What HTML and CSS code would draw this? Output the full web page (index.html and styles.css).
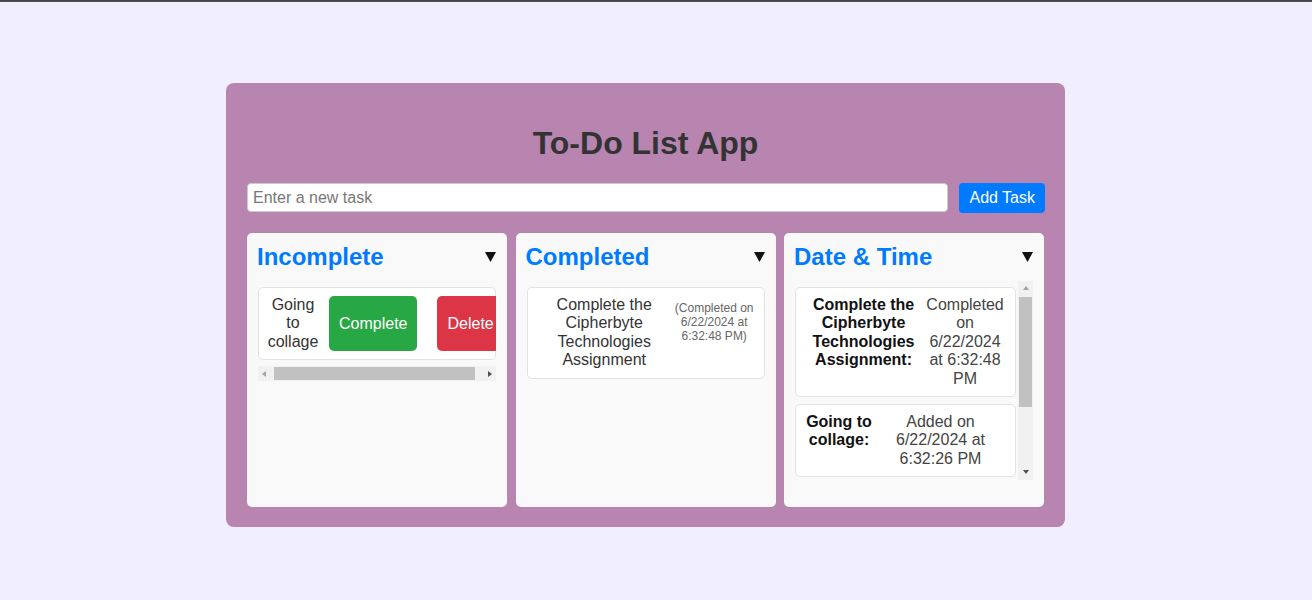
FILE: index.html
```html
<!DOCTYPE html>
<html lang="en">
<head>
<meta charset="utf-8">
<title>To-Do List App</title>
<link rel="stylesheet" href="styles.css">
</head>
<body>
<div class="app">
  <h1 class="title">To-Do List App</h1>
  <div class="add-row">
    <input class="task-input" type="text" placeholder="Enter a new task">
    <button class="add-btn">Add Task</button>
  </div>
  <div class="columns">
    <section class="column">
      <div class="col-head">
        <h2 class="col-title">Incomplete</h2>
        <span class="toggle"><svg width="11" height="10" viewBox="0 0 11 10"><polygon points="0,0 11,0 5.5,10" fill="#111"/></svg></span>
      </div>
      <div class="list list-h">
        <div class="list-items">
          <div class="task">
            <span class="task-text">Going to collage</span>
            <button class="btn btn-complete">Complete</button>
            <button class="btn btn-delete">Delete</button>
          </div>
        </div>
        <div class="hbar">
          <span class="sb-btn"><span class="arr arr-left"></span></span>
          <span class="hbar-track"><span class="hbar-thumb"></span></span>
          <span class="sb-btn"><span class="arr arr-right"></span></span>
        </div>
      </div>
    </section>
    <section class="column">
      <div class="col-head">
        <h2 class="col-title">Completed</h2>
        <span class="toggle"><svg width="11" height="10" viewBox="0 0 11 10"><polygon points="0,0 11,0 5.5,10" fill="#111"/></svg></span>
      </div>
      <div class="list">
        <div class="list-items">
          <div class="task">
            <span class="task-text">Complete the Cipherbyte Technologies Assignment</span>
            <span class="task-meta">(Completed on 6/22/2024 at 6:32:48 PM)</span>
          </div>
        </div>
      </div>
    </section>
    <section class="column">
      <div class="col-head">
        <h2 class="col-title">Date &amp; Time</h2>
        <span class="toggle"><svg width="11" height="10" viewBox="0 0 11 10"><polygon points="0,0 11,0 5.5,10" fill="#111"/></svg></span>
      </div>
      <div class="list list-v">
        <div class="list-items">
          <div class="task">
            <span class="task-name">Complete the Cipherbyte Technologies Assignment:</span>
            <span class="task-date">Completed on 6/22/2024 at 6:32:48 PM</span>
          </div>
          <div class="task">
            <span class="task-name">Going to collage:</span>
            <span class="task-date">Added on 6/22/2024 at 6:32:26 PM</span>
          </div>
        </div>
        <div class="vbar">
          <span class="sb-btn"><span class="arr arr-up"></span></span>
          <span class="vbar-track"><span class="vbar-thumb"></span></span>
          <span class="sb-btn"><span class="arr arr-down"></span></span>
        </div>
      </div>
    </section>
  </div>
</div>
</body>
</html>
```
FILE: styles.css
```css
html, body {
  margin: 0;
}
body {
  min-height: 100vh;
  box-sizing: border-box;
  padding: 10px 21px 0 0;
  display: flex;
  align-items: center;
  justify-content: center;
  background: linear-gradient(#3e3e3e 0, #555 2px, #f0eeff 2px, #f0eeff 100%);
  font-family: "Liberation Sans", Arial, sans-serif;
  color: #333;
}
.app {
  width: 799px;
  padding: 20px;
  background: #b884b0;
  border-radius: 8px;
}
.title {
  font-size: 32px;
  font-weight: bold;
  text-align: center;
  color: #333;
  margin: 21.44px 0;
}
.add-row {
  display: flex;
  align-items: center;
  margin-bottom: 20px;
  padding-left: 1px;
}
.task-input {
  flex: 1;
  margin: 0 11px 0 0;
  height: 29px;
  box-sizing: border-box;
  padding: 4px 5px;
  border: 1px solid #ccc;
  border-radius: 4px;
  font-family: "Liberation Sans", Arial, sans-serif;
  font-size: 16px;
  color: #333;
  background: #fff;
}
.task-input::placeholder {
  color: #777;
}
.add-btn {
  height: 30px;
  padding: 0 10px;
  border: none;
  border-radius: 4px;
  background: #007bff;
  color: #fff;
  font-family: "Liberation Sans", Arial, sans-serif;
  font-size: 16px;
}
.columns {
  display: grid;
  grid-template-columns: repeat(3, 1fr);
  gap: 8.5px;
  padding: 0 1px;
}
.column {
  height: 274px;
  box-sizing: border-box;
  padding: 10px;
  background: #f9f9f9;
  border-radius: 5px;
  overflow: hidden;
}
.col-head {
  display: flex;
  align-items: center;
  justify-content: space-between;
  margin-bottom: 10px;
  padding-right: 1px;
}
.col-title {
  margin: 0;
  font-size: 24px;
  font-weight: bold;
  color: #007bff;
}
.toggle {
  display: flex;
  width: 11px;
  height: 10px;
}
.list {
  margin: 0 1px;
}
.list-items {
  padding-top: 6px;
  overflow: hidden;
}
.list-h .list-items {
  padding-bottom: 6px;
}
.list-v {
  display: flex;
  height: 199px;
}
.list-v .list-items {
  flex: 1;
  padding-right: 2px;
}
.task {
  display: flex;
  align-items: stretch;
  padding: 8px;
  background: #fff;
  border: 1px solid #e2e2e2;
  border-radius: 5px;
  font-size: 16px;
  line-height: 1.15;
  color: #333;
}
.list-v .task {
  margin-bottom: 7px;
}
.task-text {
  flex: 1 1 auto;
  text-align: center;
  align-self: flex-start;
}
.list-h .task-text {
  min-width: 52px;
}
.task-meta {
  flex: 1 1 auto;
  text-align: center;
  font-size: 12px;
  color: #666;
  margin-top: 6px;
}
.task-name {
  flex: 1 1 auto;
  text-align: center;
  font-weight: bold;
  color: #111;
}
.task-date {
  flex: 1 1 auto;
  text-align: center;
  color: #444;
}
.btn {
  margin: 0 10px;
  padding: 0 10px;
  border: none;
  border-radius: 5px;
  color: #fff;
  font-family: "Liberation Sans", Arial, sans-serif;
  font-size: 16px;
  white-space: nowrap;
}
.btn-complete {
  background: #28a745;
}
.btn-delete {
  background: #dc3545;
}

/* drawn classic scrollbars */
.hbar, .vbar {
  display: flex;
  background: #f1f1f1;
}
.hbar {
  height: 15px;
}
.vbar {
  flex-direction: column;
  width: 15px;
  flex: none;
}
.sb-btn {
  display: flex;
  align-items: center;
  justify-content: center;
  width: 15px;
  height: 15px;
  flex: none;
}
.hbar-track {
  flex: 1;
  display: flex;
  padding: 1px 0 1px 1px;
}
.hbar-thumb {
  width: 201px;
  background: #c1c1c1;
}
.vbar-track {
  flex: 1;
  display: flex;
  flex-direction: column;
  padding: 1px 1px 0;
}
.vbar-thumb {
  height: 110px;
  background: #c1c1c1;
}
.arr {
  width: 0;
  height: 0;
}
.arr-left {
  border-top: 3.5px solid transparent;
  border-bottom: 3.5px solid transparent;
  border-right: 4px solid #a3a3a3;
  margin-right: 3px;
}
.arr-right {
  border-top: 3.5px solid transparent;
  border-bottom: 3.5px solid transparent;
  border-left: 4px solid #505050;
  margin-left: 2px;
}
.arr-up {
  border-left: 3.5px solid transparent;
  border-right: 3.5px solid transparent;
  border-bottom: 4px solid #a3a3a3;
}
.arr-down {
  border-left: 3.5px solid transparent;
  border-right: 3.5px solid transparent;
  border-top: 4px solid #505050;
}
```
